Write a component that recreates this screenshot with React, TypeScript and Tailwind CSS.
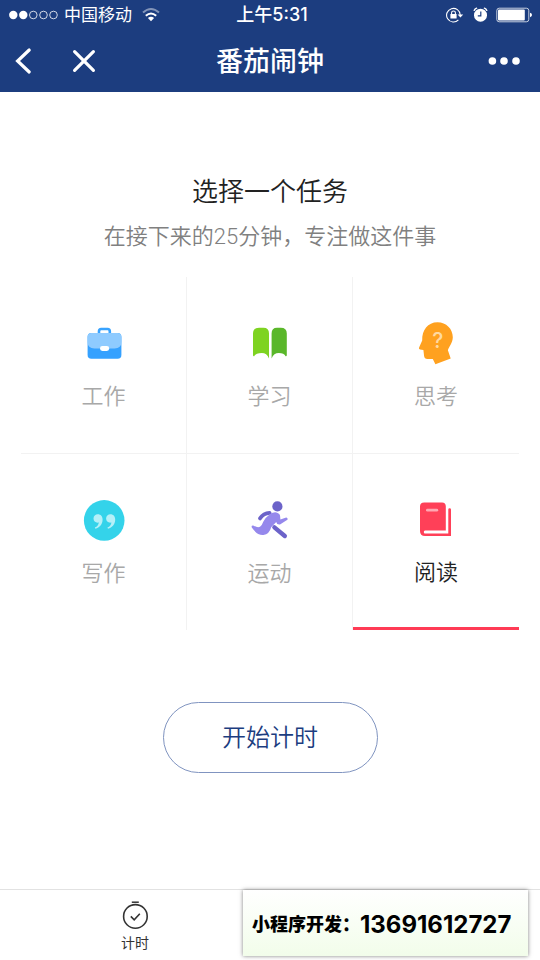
import React, { useState } from 'react';

interface Task {
  id: string;
  label: string;
  icon: React.ReactNode;
}

const WorkIcon = () => (
  <svg className="size-11" viewBox="0 0 44 44" fill="none" aria-hidden="true">
    <path d="M17 12V9.2Q17 7 19.2 7H25.6Q27.8 7 27.8 9.2V12" stroke="#38a3ff" strokeWidth="2.6" />
    <rect x="5.6" y="11" width="33.8" height="25.8" rx="3.8" fill="#35a1ff" />
    <path d="M5.6 15Q5.6 11 9.6 11H35.4Q39.4 11 39.4 15V20Q39.4 26.4 32.6 26.4H12.4Q5.6 26.4 5.6 20Z" fill="#8fcbff" />
    <rect x="18" y="24" width="9.2" height="4.9" rx="2.4" fill="#fff" />
  </svg>
);

const StudyIcon = () => (
  <svg className="size-11" viewBox="0 0 44 44" aria-hidden="true">
    <path d="M5 11.5Q5 5.7 11 5.7H15.5Q21 5.7 21 11.5V36.4Q18.8 31 13.8 31Q8 31 6.2 34.3Q5 34.6 5 33Z" fill="#7ed321" />
    <path d="M38.8 11.5Q38.8 5.7 32.8 5.7H29Q23.6 5.7 23.6 11.5V36.4Q25.8 31 30.8 31Q36 31 37.6 34.3Q38.8 34.6 38.8 33Z" fill="#5ab72a" />
  </svg>
);

const ThinkIcon = () => (
  <svg className="size-11" viewBox="0 0 44 44" aria-hidden="true">
    <path
      d="M23.5 0.2C32.3 0.2 38.8 6.9 38.8 15.2C38.8 20.6 34.6 25.2 33.9 28.2L36.7 36.6L21.4 42.2L18.8 36.9H13.4Q10.4 36.9 10.1 34L9.4 28L6 27.4Q4.4 27 5.1 25.4L8.2 18.5C7.8 8.2 13.8 0.2 23.5 0.2Z"
      fill="#ffa11f"
    />
    <text x="23.7" y="26" textAnchor="middle" fontSize="21" className="font-['Inter',sans-serif] font-medium" fill="#ffd9a1">?</text>
  </svg>
);

const WriteIcon = () => (
  <svg className="size-11" viewBox="0 0 44 44" aria-hidden="true">
    <circle cx="22.2" cy="21.4" r="20.3" fill="#34d3ea" />
    <g fill="#b5f0f8">
      <path d="M15.8 15.2C18.8 15.2 20.6 17.4 20.6 20.6C20.6 25.4 17.6 28.6 13.4 29.8L12.8 28.6C15.3 27.5 16.6 25.8 16.8 23.5C13.9 24.2 11.5 22.3 11.5 19.5C11.5 17 13.4 15.2 15.8 15.2Z" />
      <path d="M28.4 15.2C31.4 15.2 33.2 17.4 33.2 20.6C33.2 25.4 30.2 28.6 26 29.8L25.4 28.6C27.9 27.5 29.2 25.8 29.4 23.5C26.5 24.2 24.1 22.3 24.1 19.5C24.1 17 26 15.2 28.4 15.2Z" />
    </g>
  </svg>
);

const SportIcon = () => (
  <svg className="size-11" viewBox="0 0 44 44" fill="none" strokeLinecap="round" strokeLinejoin="round" aria-hidden="true">
    <circle cx="29.4" cy="7.4" r="5.1" fill="#6c63c9" />
    <path d="M12 19.4Q15.5 14.2 21.6 13.8" stroke="#6c63c9" strokeWidth="3.8" />
    <path d="M26.4 28.4L36.8 37" stroke="#6c63c9" strokeWidth="4.4" />
    <path
      d="M20.4 16.4Q24 12.8 28.4 13.4Q32.4 14.4 32.2 18.2L32.4 20.6L38.2 18.6Q40.2 19 39.4 20.8L32 25.4Q29 26 28.2 23L23.2 28.2Q21.4 35 15.4 36Q9.4 36.6 3.8 28.6Q3 26.2 5.2 26.4Q9.4 29 12 27.8Q14 26.2 15.4 22.4Q17 18.8 20.4 16.4Z"
      fill="#9588ec"
    />
  </svg>
);

const ReadIcon = () => (
  <svg className="size-11" viewBox="0 0 44 44" fill="none" aria-hidden="true">
    <path d="M10.2 4.4H28Q31.8 4.4 31.8 8.2V32.4H11Q9.8 32.6 9.8 34Q9.8 35.5 11 35.5H34.3V11.4Q34.3 10.2 35.6 10.2Q37 10.2 37 11.4V38H11Q6 38 6 33V8.6Q6 4.4 10.2 4.4Z" fill="#ff4058" />
    <rect x="12" y="10.8" width="12.2" height="2.8" rx="1.4" fill="#ffa7b2" />
  </svg>
);

const tasks: Task[] = [
  { id: 'work', label: '工作', icon: <WorkIcon /> },
  { id: 'study', label: '学习', icon: <StudyIcon /> },
  { id: 'think', label: '思考', icon: <ThinkIcon /> },
  { id: 'write', label: '写作', icon: <WriteIcon /> },
  { id: 'sport', label: '运动', icon: <SportIcon /> },
  { id: 'read', label: '阅读', icon: <ReadIcon /> },
];

const StatusBar = () => (
  <div className="grid h-[30px] grid-cols-[1fr_auto_1fr] items-center px-2 text-[17px] leading-6">
    <div className="flex items-center gap-1.5">
      <svg className="h-3 w-[50px]" viewBox="0 0 50 12" aria-hidden="true">
        <g fill="#fff">
          <circle cx="5.3" cy="6" r="4.2" />
          <circle cx="15.3" cy="6" r="4.2" />
        </g>
        <g fill="none" stroke="#fff" strokeWidth="0.8">
          <circle cx="25.3" cy="6" r="3.8" />
          <circle cx="35.5" cy="6" r="3.8" />
          <circle cx="45.5" cy="6" r="3.8" />
        </g>
      </svg>
      <span>中国移动</span>
      <svg className="ml-1 h-4 w-[18px]" viewBox="0 0 18 16" fill="none" aria-hidden="true">
        <path d="M1 5.6Q9 -1.6 17 5.6" stroke="#fff" strokeOpacity="0.45" strokeWidth="2" />
        <path d="M3.8 8.7Q9 4.2 14.2 8.7" stroke="#fff" strokeWidth="2" />
        <path d="M5.9 11Q9 8.6 12.1 11L9 14.2Z" fill="#fff" />
      </svg>
    </div>
    <span className="pl-1 text-lg leading-6 font-medium">上午5:31</span>
    <div className="flex items-center justify-end gap-2">
      <svg className="h-4 w-[18px]" viewBox="0 0 18 16" fill="none" aria-hidden="true">
        <path d="M14.2 8A6.8 6.8 0 1 0 12.4 12.8" stroke="#fff" strokeWidth="1.1" />
        <path d="M11.6 7.4H17.2L14.4 10.6Z" fill="#fff" />
        <rect x="4.4" y="7" width="6.2" height="4.6" rx="0.5" fill="#fff" />
        <path d="M5.6 7V5.8Q5.6 4 7.5 4Q9.4 4 9.4 5.8V7" stroke="#fff" strokeWidth="1.1" />
      </svg>
      <svg className="size-4" viewBox="0 0 16 16" fill="none" aria-hidden="true">
        <circle cx="8.5" cy="8.2" r="6.5" fill="#fff" />
        <path d="M2.2 3.4Q2.8 1.8 4.6 1.2M14.8 3.4Q14.2 1.8 12.4 1.2" stroke="#fff" strokeWidth="1.4" strokeLinecap="round" />
        <path d="M8.8 4.6V8.8H5.8" stroke="#1c3d7f" strokeWidth="1.2" />
      </svg>
      <svg className="h-4 w-9" viewBox="0 0 36 16" fill="none" aria-hidden="true">
        <rect x="0.8" y="1.2" width="32" height="13.6" rx="2.4" stroke="#fff" strokeOpacity="0.75" strokeWidth="1" />
        <rect x="2" y="2.6" width="26.8" height="10.8" rx="1" fill="#fff" />
        <path d="M34 5.8Q36 6.4 36 8Q36 9.6 34 10.2Z" fill="#fff" />
      </svg>
    </div>
  </div>
);

const NavBar = () => (
  <div className="grid h-[62px] grid-cols-[1fr_auto_1fr] items-center px-3">
    <div className="flex items-center gap-8">
      <button type="button" aria-label="返回">
        <svg className="size-7" viewBox="0 0 28 28" fill="none" strokeLinecap="round" aria-hidden="true">
          <path d="M17.2 3L5.6 14L17.2 25" stroke="#fff" strokeWidth="3.2" />
        </svg>
      </button>
      <button type="button" aria-label="关闭">
        <svg className="size-6" viewBox="0 0 24 24" fill="none" strokeLinecap="round" aria-hidden="true">
          <path d="M2.6 2.6L21.4 21.4M21.4 2.6L2.6 21.4" stroke="#fff" strokeWidth="3.2" />
        </svg>
      </button>
    </div>
    <h1 className="pt-0.5 text-[27px] leading-9 font-medium">番茄闹钟</h1>
    <button type="button" aria-label="更多" className="justify-self-end pr-2">
      <svg className="h-2 w-8" viewBox="0 0 32 8" fill="#fff" aria-hidden="true">
        <circle cx="4.4" cy="4" r="3.8" />
        <circle cx="16" cy="4" r="3.8" />
        <circle cx="28" cy="4" r="3.8" />
      </svg>
    </button>
  </div>
);

export default function App() {
  const [selected, setSelected] = useState('read');

  return (
    <div className="relative flex min-h-screen flex-col bg-white font-['Inter','Noto_Sans_CJK_SC',sans-serif]">
      <header className="bg-[#1c3d7f] text-white">
        <StatusBar />
        <NavBar />
      </header>

      <main className="flex flex-1 flex-col items-center px-[21px] pt-[82px]">
        <h2 className="text-[26px] leading-9 font-[350] text-[#222]">选择一个任务</h2>
        <p className="mt-[11px] font-['Roboto','Noto_Sans_CJK_SC',sans-serif] text-[22px] leading-8 font-[350] text-[#808080]">
          在接下来的25分钟，专注做这件事
        </p>

        <div className="mt-6 grid w-full grid-cols-3">
          {tasks.map((task, i) => {
            const active = task.id === selected;
            return (
              <div
                key={task.id}
                className={`border-[#f2f2f2] ${i % 3 < 2 ? 'border-r' : ''} ${i < 3 ? 'border-b' : ''}`}
              >
                <button
                  type="button"
                  aria-pressed={active}
                  onClick={() => setSelected(task.id)}
                  className={`flex h-44 w-full flex-col items-center justify-center gap-4 pt-0.5 text-[22px] leading-7 font-[350] ${
                    active ? 'border-b-3 border-[#ff3b55] text-[#222]' : 'text-[#a8a8a8]'
                  }`}
                >
                  {task.icon}
                  <span>{task.label}</span>
                </button>
              </div>
            );
          })}
        </div>

        <button
          type="button"
          className="mt-[72px] h-[71px] w-[215px] rounded-full border border-[#8094c0] text-2xl font-[350] text-[#1c3d7f]"
        >
          开始计时
        </button>
      </main>

      <nav className="grid h-[71px] grid-cols-2 border-t border-[#e2e2e2] bg-white">
        <a href="#timer" className="flex flex-col items-center justify-center gap-0.5 pt-1 text-sm text-[#333]">
          <svg className="size-[30px]" viewBox="0 0 30 30" fill="none" stroke="#333" aria-hidden="true">
            <path d="M11.8 1.2H18.8" strokeWidth="1.5" />
            <circle cx="15.4" cy="15.4" r="11.8" strokeWidth="1.6" />
            <path d="M10.8 15.4L14.2 18.8L19.8 12.8" strokeWidth="1.6" />
          </svg>
          <span>计时</span>
        </a>
      </nav>

      <aside className="absolute right-3 bottom-1 flex h-[66px] w-[285px] items-center bg-linear-to-b from-white to-[#f2fdea] pt-1 pl-[9px] font-['Inter','Noto_Sans_CJK_SC',sans-serif] font-black whitespace-nowrap text-black shadow-[0_0_4px_rgba(0,0,0,0.5)]">
        <span className="text-lg">小程序开发：</span>
        <span className="text-2xl font-bold">13691612727</span>
      </aside>
    </div>
  );
}
